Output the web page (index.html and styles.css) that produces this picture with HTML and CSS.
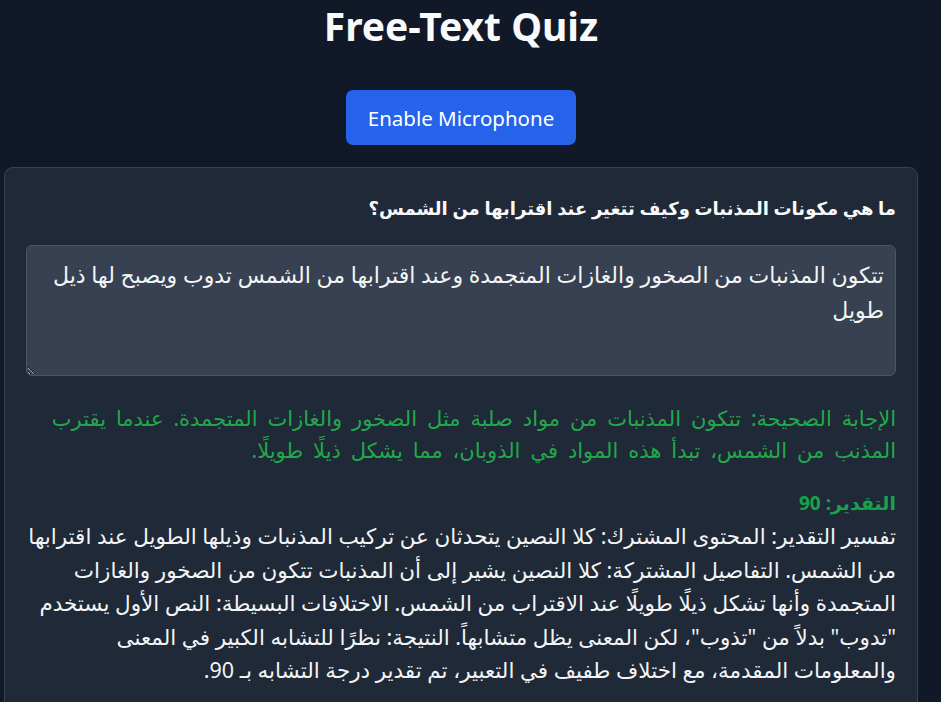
FILE: index.html
```html
<!DOCTYPE html>
<html lang="ar">
<head>
<meta charset="utf-8">
<title>Free-Text Quiz</title>
<link rel="stylesheet" href="styles.css">
</head>
<body>
<div class="page">
  <h1 class="title">Free-Text Quiz</h1>
  <div class="actions">
    <button class="mic-btn" type="button">Enable Microphone</button>
  </div>
  <div class="card" dir="rtl">
    <h2 class="question">ما هي مكونات المذنبات وكيف تتغير عند اقترابها من الشمس؟</h2>
    <textarea class="answer-input" dir="rtl">تتكون المذنبات من الصخور والغازات المتجمدة وعند اقترابها من الشمس تدوب ويصبح لها ذيل طويل</textarea>
    <p class="correct">الإجابة الصحيحة: تتكون المذنبات من مواد صلبة مثل الصخور والغازات المتجمدة. عندما يقترب المذنب من الشمس، تبدأ هذه المواد في الذوبان، مما يشكل ذيلًا طويلًا.</p>
    <p class="score">التقدير: 90</p>
    <p class="explain">تفسير التقدير: المحتوى المشترك: كلا النصين يتحدثان عن تركيب المذنبات وذيلها الطويل عند اقترابها من الشمس. التفاصيل المشتركة: كلا النصين يشير إلى أن المذنبات تتكون من الصخور والغازات المتجمدة وأنها تشكل ذيلًا طويلًا عند الاقتراب من الشمس. الاختلافات البسيطة: النص الأول يستخدم "تدوب" بدلاً من "تذوب"، لكن المعنى يظل متشابهاً. النتيجة: نظرًا للتشابه الكبير في المعنى والمعلومات المقدمة، مع اختلاف طفيف في التعبير، تم تقدير درجة التشابه بـ 90.</p>
  </div>
</div>
</body>
</html>
```
FILE: styles.css
```css
html, body {
  margin: 0;
  padding: 0;
  background: #111827;
  color: #f3f4f6;
  font-family: "Noto Sans", "DejaVu Sans", sans-serif;
}

.page {
  padding: 0 23px 0 4px;
}

.title {
  margin: 0;
  text-align: center;
  font-size: 39px;
  line-height: 52px;
  font-weight: 700;
  color: #f9fafb;
}

.actions {
  display: flex;
  justify-content: center;
  margin-top: 38px;
}

.mic-btn {
  background: #2563eb;
  color: #ffffff;
  border: none;
  border-radius: 7px;
  height: 55px;
  width: 230px;
  font-family: inherit;
  font-size: 20.5px;
}

.card {
  margin-top: 22px;
  background: #1f2937;
  border: 1px solid #374151;
  border-radius: 9px;
  padding: 24px 21px 24px 21px;
}

.question {
  margin: 0;
  font-size: 18px;
  line-height: 32px;
  font-weight: 700;
  color: #f9fafb;
}

.answer-input {
  display: block;
  box-sizing: border-box;
  width: 100%;
  height: 131px;
  margin-top: 21px;
  padding: 11px 11px;
  background: #374151;
  border: 1px solid #4b5563;
  border-radius: 6px;
  color: #f3f4f6;
  color-scheme: dark;
  font-family: inherit;
  font-size: 22px;
  line-height: 35px;
}

.correct {
  margin: 26px 0 0;
  color: #22a84a;
  font-size: 21px;
  word-spacing: 4.5px;
  line-height: 32px;
}

.score {
  margin: 21px 0 0;
  color: #16a34a;
  font-weight: 700;
  font-size: 19px;
  line-height: 32px;
}

.explain {
  margin: 0;
  color: #f3f4f6;
  font-size: 21.5px;
  line-height: 33.5px;
}
```
